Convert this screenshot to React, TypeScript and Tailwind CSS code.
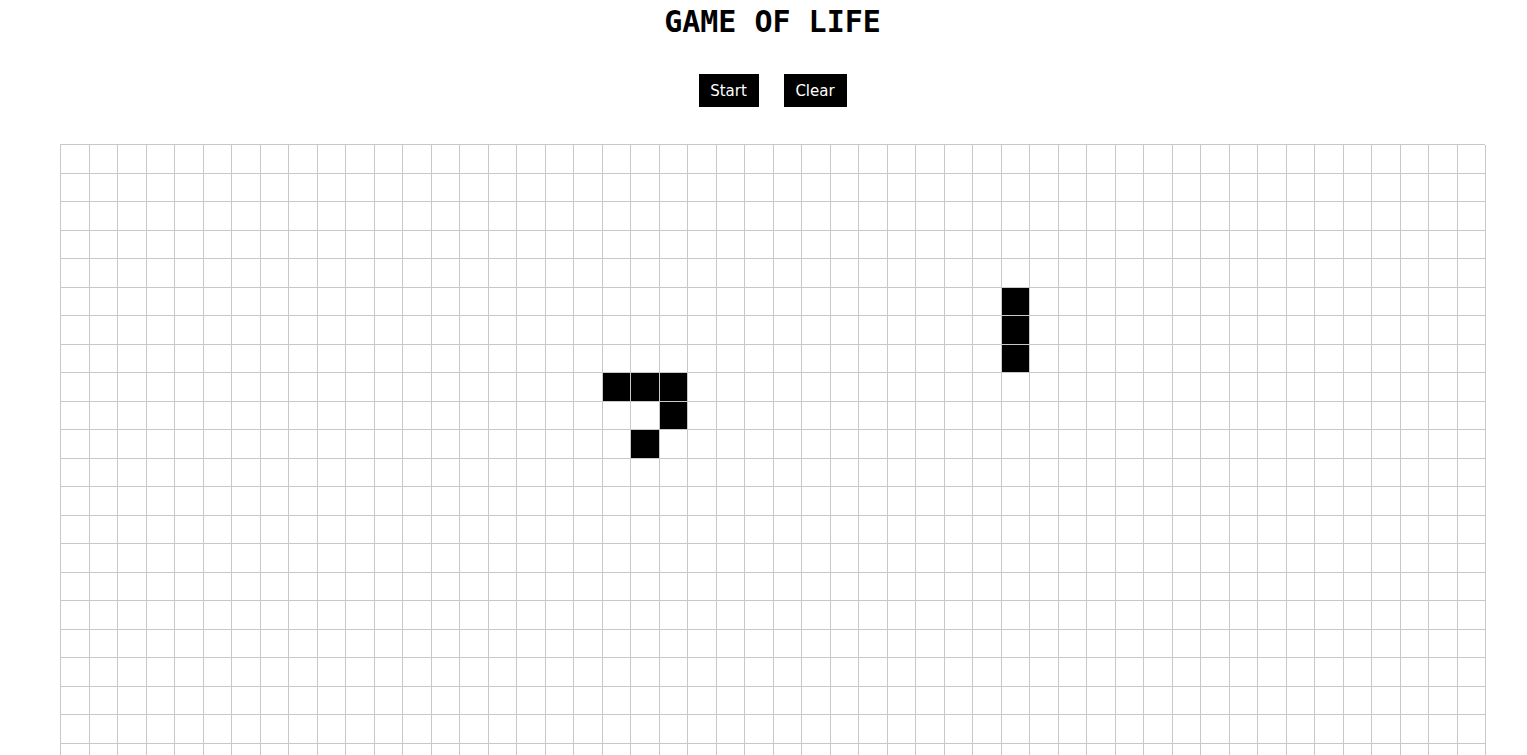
import React, { useState } from 'react';

const COLS = 50;
const ROWS = 22;

// initial live cells: a glider and a blinker
const START = ['8-19', '8-20', '8-21', '9-21', '10-20', '5-33', '6-33', '7-33'];

export default function App() {
  const [live, setLive] = useState<Set<string>>(new Set(START));
  const [running, setRunning] = useState(false);

  const toggle = (key: string) => {
    setLive((prev) => {
      const next = new Set(prev);
      if (next.has(key)) next.delete(key);
      else next.add(key);
      return next;
    });
  };

  return (
    <div className="h-screen overflow-hidden bg-white">
      <div className="ml-[60px] w-[1425px]">
        <h1
          className="text-center text-[30px] font-bold leading-[44px] text-black"
          style={{ fontFamily: '"DejaVu Sans Mono", "Liberation Mono", monospace' }}
        >
          GAME OF LIFE
        </h1>

        <div className="mt-[30px] flex justify-center gap-[25px]" style={{ fontFamily: '"DejaVu Sans", sans-serif' }}>
          <button
            className="h-[33px] w-[60px] bg-black pt-[2px] text-[15px] text-white"
            onClick={() => setRunning(!running)}
          >
            {running ? 'Stop' : 'Start'}
          </button>
          <button
            className="h-[33px] w-[63px] bg-black pt-[2px] text-[15px] text-white"
            onClick={() => setLive(new Set())}
          >
            Clear
          </button>
        </div>

        <div className="mt-[37px] grid grid-cols-[repeat(50,28.5px)] border-l border-t border-[#c8c8c8]">
          {Array.from({ length: ROWS * COLS }).map((_, i) => {
            const key = `${Math.floor(i / COLS)}-${i % COLS}`;
            return (
              <div
                key={key}
                onClick={() => toggle(key)}
                className={`h-[28.5px] border-b border-r border-[#c8c8c8] ${live.has(key) ? 'bg-black' : 'bg-white'}`}
              />
            );
          })}
        </div>
      </div>
    </div>
  );
}
